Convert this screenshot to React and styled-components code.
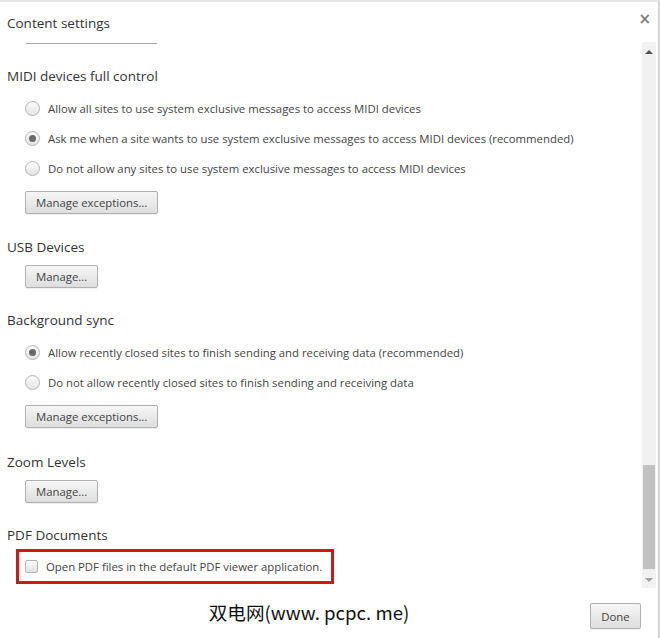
import styled, { createGlobalStyle } from 'styled-components'

const GlobalStyle = createGlobalStyle`
  html, body {
    margin: 0;
    padding: 0;
    background: #ffffff;
  }
  body {
    font-family: 'Open Sans', 'Liberation Sans', sans-serif;
    color: #333;
  }
`

const Dialog = styled.div`
  box-sizing: border-box;
  width: 660px;
  height: 638px;
  display: flex;
  flex-direction: column;
  background: #fff;
  border-top: 2px solid #e6e6e6;
  border-right: 2px solid #d4d4d4;
`

const Header = styled.div`
  height: 40px;
  display: flex;
  justify-content: space-between;
  align-items: flex-start;
  padding: 12px 7px 0 7px;
  box-sizing: border-box;
`

const Title = styled.div`
  font-size: 13.5px;
  line-height: 18px;
  color: #333;
`

const CloseButton = styled.div`
  font-size: 15px;
  line-height: 12px;
  font-weight: bold;
  color: #808080;
  font-family: 'DejaVu Sans', sans-serif;
  margin-top: -1px;
`

const Body = styled.div`
  display: flex;
  height: 546px;
`

const Content = styled.div`
  flex: 1;
  padding-left: 7px;
  overflow: hidden;
`

const Separator = styled.div`
  margin-left: 19px;
  width: 131px;
  height: 1px;
  background: #a8a8a8;
  margin-top: 1px;
`

const Section = styled.div`
  margin-top: ${(p) => (p.gap ? p.gap : 22)}px;
`

const Heading = styled.div`
  font-size: 13.5px;
  line-height: 20px;
  color: #333;
`

const Options = styled.div`
  display: flex;
  flex-direction: column;
  gap: 6px;
  margin-top: 10px;
  padding-left: 18px;
`

const Option = styled.label`
  display: flex;
  align-items: center;
  height: 24px;
  gap: 8px;
  font-size: 11.35px;
  color: #444;
`

const Radio = styled.span`
  box-sizing: border-box;
  width: 15px;
  height: 15px;
  border-radius: 50%;
  border: 1px solid #b4b4b4;
  background: linear-gradient(#fbfbfb, #e4e4e4);
  display: flex;
  align-items: center;
  justify-content: center;
  &::after {
    content: '';
    width: 7px;
    height: 7px;
    border-radius: 50%;
    background: ${(p) => (p.checked ? '#6a6a6a' : 'transparent')};
  }
`

const Button = styled.button`
  box-sizing: border-box;
  height: 23px;
  padding: 0 10px;
  border: 1px solid #b0b0b0;
  border-radius: 2px;
  background: linear-gradient(#f6f6f6, #dedede);
  font-family: 'Open Sans', 'Liberation Sans', sans-serif;
  font-size: 11.35px;
  color: #444;
  box-shadow: 0 1px 0 rgba(0, 0, 0, 0.06);
`

const ButtonRow = styled.div`
  display: flex;
  margin-top: ${(p) => p.top}px;
  padding-left: 18px;
`

const Highlight = styled.div`
  margin-top: 4px;
  margin-left: 9px;
  width: 318px;
  height: 35px;
  box-sizing: border-box;
  border: 3px solid #cc1a1a;
  display: flex;
  align-items: center;
  padding-left: 6px;
  gap: 8px;
  font-size: 11.35px;
  color: #444;
`

const Checkbox = styled.span`
  box-sizing: border-box;
  width: 13px;
  height: 13px;
  border: 1px solid #b4b4b4;
  border-radius: 2px;
  background: linear-gradient(#fbfbfb, #e2e2e2);
`

const Scrollbar = styled.div`
  width: 14px;
  margin-right: 2px;
  background: #f1f1f1;
  display: flex;
  flex-direction: column;
  align-items: center;
`

const Arrow = styled.div`
  width: 0;
  height: 0;
  border-left: 4px solid transparent;
  border-right: 4px solid transparent;
  ${(p) =>
    p.down
      ? 'border-top: 4px solid #a0a0a0; margin-top: 5px; margin-bottom: 6px;'
      : 'border-bottom: 4px solid #505050; margin-top: 8px;'}
`

const Track = styled.div`
  flex: 1;
  width: 100%;
  display: flex;
  flex-direction: column;
  justify-content: flex-end;
  align-items: center;
`

const Thumb = styled.div`
  width: 12px;
  height: 104px;
  background: #c1c1c1;
  margin-bottom: 4px;
`

const Footer = styled.div`
  flex: 1;
  display: flex;
  align-items: flex-start;
  padding-top: 15px;
  padding-right: 17px;
  box-sizing: border-box;
`

const Watermark = styled.div`
  flex: 1;
  text-align: center;
  padding-left: 28px;
  font-family: 'Noto Sans CJK SC', sans-serif;
  font-size: 18.6px;
  line-height: 24px;
  margin-top: -3px;
  color: #111;
`

const DoneButton = styled(Button)`
  height: 26px;
  width: 51px;
  padding: 0;
`

function RadioOption({ checked, children }) {
  return (
    <Option>
      <Radio checked={checked} />
      {children}
    </Option>
  )
}

export default function App() {
  return (
    <>
      <GlobalStyle />
      <Dialog>
        <Header>
          <Title>Content settings</Title>
          <CloseButton>×</CloseButton>
        </Header>
        <Body>
          <Content>
            <Separator />
            <Section>
              <Heading>MIDI devices full control</Heading>
              <Options>
                <RadioOption>Allow all sites to use system exclusive messages to access MIDI devices</RadioOption>
                <RadioOption checked>
                  Ask me when a site wants to use system exclusive messages to access MIDI devices (recommended)
                </RadioOption>
                <RadioOption>Do not allow any sites to use system exclusive messages to access MIDI devices</RadioOption>
              </Options>
              <ButtonRow top={11}>
                <Button>Manage exceptions...</Button>
              </ButtonRow>
            </Section>
            <Section gap={23}>
              <Heading>USB Devices</Heading>
              <ButtonRow top={8}>
                <Button>Manage...</Button>
              </ButtonRow>
            </Section>
            <Section>
              <Heading>Background sync</Heading>
              <Options>
                <RadioOption checked>
                  Allow recently closed sites to finish sending and receiving data (recommended)
                </RadioOption>
                <RadioOption>Do not allow recently closed sites to finish sending and receiving data</RadioOption>
              </Options>
              <ButtonRow top={11}>
                <Button>Manage exceptions...</Button>
              </ButtonRow>
            </Section>
            <Section gap={24}>
              <Heading>Zoom Levels</Heading>
              <ButtonRow top={8}>
                <Button>Manage...</Button>
              </ButtonRow>
            </Section>
            <Section>
              <Heading>PDF Documents</Heading>
              <Highlight>
                <Checkbox />
                Open PDF files in the default PDF viewer application.
              </Highlight>
            </Section>
          </Content>
          <Scrollbar>
            <Arrow />
            <Track>
              <Thumb />
            </Track>
            <Arrow down />
          </Scrollbar>
        </Body>
        <Footer>
          <Watermark>双电网(www. pcpc. me)</Watermark>
          <DoneButton>Done</DoneButton>
        </Footer>
      </Dialog>
    </>
  )
}
